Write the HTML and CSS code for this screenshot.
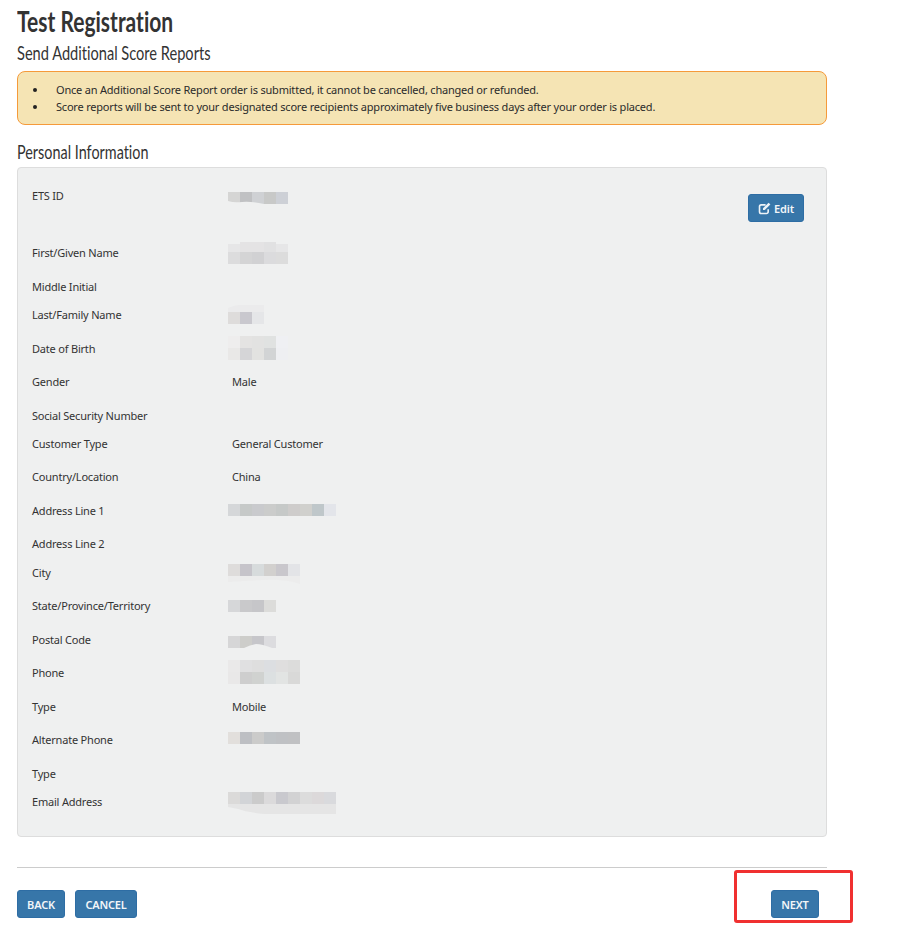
FILE: index.html
```html
<!DOCTYPE html>
<html lang="en">
<head>
    <meta charset="UTF-8">
    <meta name="viewport" content="width=device-width, initial-scale=1.0">
    <title>Test Registration</title>
    <link rel="stylesheet" href="styles.css">
</head>
<body>
    <div class="page">
        <h1 class="page-title">Test Registration</h1>
        <h2 class="page-subtitle">Send Additional Score Reports</h2>

        <div class="notice">
            <ul>
                <li>Once an Additional Score Report order is submitted, it cannot be cancelled, changed or refunded.</li>
                <li>Score reports will be sent to your designated score recipients approximately five business days after your order is placed.</li>
            </ul>
        </div>

        <h3 class="section-title">Personal Information</h3>

        <div class="panel">
            <div class="row row-first">
                <div class="label">ETS ID</div>
                <svg class="blur blur-ets" width="60" height="14">
                    <rect x="0" width="12" height="12" fill="#d5d5d4"/><rect x="12" width="12" height="12" fill="#c0c1c3"/><rect x="24" width="12" height="12" fill="#cfd1d4"/><rect x="36" width="12" height="12" fill="#c8c9c8"/><rect x="48" width="12" height="12" fill="#cdd0d6"/>
                    <path d="M0 9 Q6 11 14 10 T36 12 V12 H0 Z" fill="#eff0f0"/>
                </svg>
                <button class="btn btn-edit" type="button">
                    <svg class="icon-edit" width="13" height="13" viewBox="0 0 12 12">
                        <path d="M9.4 6.6V9a1.6 1.6 0 0 1-1.6 1.6H3A1.6 1.6 0 0 1 1.400 9V4.200A1.600 1.600 0 0 1 3 2.600h4" fill="none" stroke="#eef3f7" stroke-width="1.500"/>
                        <path d="M4.600 7.400V5.800L9.800 0.800 11.400 2.400 6.200 7.400Z" fill="#eef3f7"/>
                    </svg>
                    Edit
                </button>
            </div>
            <div class="row">
                <div class="label">First/Given Name</div>
                <svg class="blur blur-first" width="60" height="22">
                    <rect x="0" y="2" width="60" height="8" fill="#e6e6e7"/><rect x="12" y="0" width="24" height="10" fill="#e4e3e4"/><rect x="36" y="0" width="12" height="10" fill="#e1e1e2"/>
                    <rect x="0" y="10" width="12" height="12" fill="#dcdcdd"/><rect x="12" y="10" width="12" height="12" fill="#d4d4d5"/><rect x="24" y="10" width="12" height="12" fill="#d1d1d3"/><rect x="36" y="10" width="12" height="12" fill="#dbdbdd"/><rect x="48" y="10" width="12" height="12" fill="#dcdcdc"/>
                </svg>
            </div>
            <div class="row row-empty"><div class="label">Middle Initial</div></div>
            <div class="row">
                <div class="label">Last/Family Name</div>
                <svg class="blur blur-last" width="36" height="19">
                    <path d="M0 3 Q6 0 12 0 H36 V7 H0 Z" fill="#ebebec"/>
                    <rect x="0" y="7" width="12" height="12" fill="#dedcdb"/><rect x="12" y="7" width="12" height="12" fill="#c9c8ce"/><rect x="24" y="7" width="12" height="12" fill="#e5e6e8"/>
                </svg>
            </div>
            <div class="row">
                <div class="label">Date of Birth</div>
                <svg class="blur blur-dob" width="60" height="24">
                    <rect x="0" width="12" height="12" fill="#eeeded"/><rect x="12" width="12" height="12" fill="#e4e3e2"/><rect x="24" width="12" height="12" fill="#e2e2e1"/><rect x="36" width="12" height="12" fill="#e0e2e1"/><rect x="48" width="12" height="12" fill="#eff0f3"/>
                    <rect x="0" y="12" width="12" height="12" fill="#e9e8e7"/><rect x="12" y="12" width="12" height="12" fill="#d5d5d7"/><rect x="24" y="12" width="12" height="12" fill="#e2e2e0"/><rect x="36" y="12" width="12" height="12" fill="#d2d4d5"/><rect x="48" y="12" width="12" height="12" fill="#eeeff2"/>
                </svg>
            </div>
            <div class="row">
                <div class="label">Gender</div>
                <div class="value">Male</div>
            </div>
            <div class="row row-short"><div class="label">Social Security Number</div></div>
            <div class="row">
                <div class="label">Customer Type</div>
                <div class="value">General Customer</div>
            </div>
            <div class="row">
                <div class="label">Country/Location</div>
                <div class="value">China</div>
            </div>
            <div class="row">
                <div class="label">Address Line 1</div>
                <svg class="blur blur-addr" width="108" height="12">
                    <rect x="0" width="12" height="12" fill="#d5d7d9"/><rect x="12" width="12" height="12" fill="#c6c9c8"/><rect x="24" width="12" height="12" fill="#c9cacd"/><rect x="36" width="12" height="12" fill="#cbcccb"/><rect x="48" width="12" height="12" fill="#c6c9c8"/><rect x="60" width="12" height="12" fill="#cecccb"/><rect x="72" width="12" height="12" fill="#d0d0cd"/><rect x="84" width="12" height="12" fill="#bfc7ca"/><rect x="96" width="12" height="12" fill="#e3e5ea"/>
                </svg>
            </div>
            <div class="row row-empty"><div class="label">Address Line 2</div></div>
            <div class="row">
                <div class="label">City</div>
                <svg class="blur blur-city" width="72" height="20">
                    <rect x="0" width="12" height="12" fill="#dedcdb"/><rect x="12" width="12" height="12" fill="#c6c4ca"/><rect x="24" width="12" height="12" fill="#d7dbdc"/><rect x="36" width="12" height="12" fill="#d2d0ce"/><rect x="48" width="12" height="12" fill="#c9c7cc"/><rect x="60" width="12" height="12" fill="#e3e4e7"/>
                    <path d="M0 12 H72 V20 Q56 15 36 16 T0 18 Z" fill="#ececec"/>
                </svg>
            </div>
            <div class="row">
                <div class="label">State/Province/Territory</div>
                <svg class="blur blur-state" width="48" height="12">
                    <rect x="0" width="12" height="12" fill="#d6d7d9"/><rect x="12" width="12" height="12" fill="#c9c9cb"/><rect x="24" width="12" height="12" fill="#c6c6c9"/><rect x="36" width="12" height="12" fill="#dcdcda"/>
                </svg>
            </div>
            <div class="row">
                <div class="label">Postal Code</div>
                <svg class="blur blur-postal" width="48" height="12">
                    <rect x="0" width="12" height="12" fill="#d6d6d7"/><rect x="12" width="12" height="12" fill="#cdcdca"/><rect x="24" width="12" height="12" fill="#c6c6ca"/><rect x="36" width="12" height="12" fill="#dcdcdf"/>
                    <path d="M16 12 Q22 9 28 8 Q34 8 44 12 Z" fill="#eff0f0"/>
                </svg>
            </div>
            <div class="row">
                <div class="label">Phone</div>
                <svg class="blur blur-phone" width="72" height="24">
                    <rect x="0" width="12" height="12" fill="#eae9e9"/><rect x="12" width="12" height="12" fill="#e0e0e1"/><rect x="24" width="12" height="12" fill="#dedede"/><rect x="36" width="12" height="12" fill="#dcdee1"/><rect x="48" width="12" height="12" fill="#dfdede"/><rect x="60" width="12" height="12" fill="#dcdcdb"/>
                    <rect x="0" y="12" width="12" height="12" fill="#e9e8e8"/><rect x="12" y="12" width="12" height="12" fill="#cecece"/><rect x="24" y="12" width="12" height="12" fill="#d0d2d0"/><rect x="36" y="12" width="12" height="12" fill="#dce0e1"/><rect x="48" y="12" width="12" height="12" fill="#e2e4e3"/><rect x="60" y="12" width="12" height="12" fill="#d9d9d8"/>
                </svg>
            </div>
            <div class="row">
                <div class="label">Type</div>
                <div class="value">Mobile</div>
            </div>
            <div class="row">
                <div class="label">Alternate Phone</div>
                <svg class="blur blur-alt" width="72" height="12">
                    <rect x="0" width="12" height="12" fill="#e2dfdc"/><rect x="12" width="12" height="12" fill="#bdbfc3"/><rect x="24" width="12" height="12" fill="#cbcbca"/><rect x="36" width="12" height="12" fill="#bfc3c6"/><rect x="48" width="12" height="12" fill="#bfc1c4"/><rect x="60" width="12" height="12" fill="#c0c1c3"/>
                </svg>
            </div>
            <div class="row row-empty"><div class="label">Type</div></div>
            <div class="row row-last">
                <div class="label">Email Address</div>
                <svg class="blur blur-email" width="108" height="23">
                    <rect x="0" width="12" height="12" fill="#dbdad9"/><rect x="12" width="12" height="12" fill="#d2d4d7"/><rect x="24" width="12" height="12" fill="#cbcbcb"/><rect x="36" width="12" height="12" fill="#dbdadb"/><rect x="48" width="12" height="12" fill="#c9c9ce"/><rect x="60" width="12" height="12" fill="#d2d2d3"/><rect x="72" width="12" height="12" fill="#dcdcdc"/><rect x="84" width="12" height="12" fill="#dcd9da"/><rect x="96" width="12" height="12" fill="#d9dadd"/>
                    <path d="M0 12 H108 V22 H36 Q18 20 10 17 L0 15 Z" fill="#e5e5e5"/>
                </svg>
            </div>
        </div>

        <div class="actions">
            <div class="actions-left">
                <button class="btn btn-action" type="button">BACK</button>
                <button class="btn btn-action btn-cancel" type="button">CANCEL</button>
            </div>
            <button class="btn btn-action btn-next" type="button">NEXT</button>
        </div>
    </div>

    <div class="highlight-box"></div>
</body>
</html>
```

FILE: styles.css
```css
* {
    margin: 0;
    padding: 0;
    box-sizing: border-box;
}

body {
    font-family: "Noto Sans", "Open Sans", sans-serif;
    font-size: 11px;
    letter-spacing: -0.2px;
    color: #333;
    background: #fff;
}

/* headings use a condensed face in the original, so squeeze Lato to fit */
.page-title,
.page-subtitle,
.section-title {
    font-family: "Lato", sans-serif;
    font-variant-ligatures: none;
    letter-spacing: 0;
    transform-origin: left center;
}

.page {
    width: 810px;
    margin-left: 17px;
    padding-top: 7px;
}

.page-title {
    font-size: 28px;
    line-height: 28px;
    font-weight: 700;
    color: #333;
    transform: scaleX(0.75);
}

.page-subtitle {
    font-size: 20px;
    line-height: 20px;
    font-weight: 400;
    margin-top: 7px;
    transform: scaleX(0.73);
}

.notice {
    margin-top: 9px;
    height: 54px;
    background: #f5e4b4;
    border: 1px solid #f59a3a;
    border-radius: 8px;
    padding: 9px 15px;
    color: #2b2b2b;
}

.notice ul {
    list-style: none;
    padding-left: 23px;
}

.notice li {
    position: relative;
    line-height: 17px;
}

.notice li::before {
    content: "";
    position: absolute;
    left: -23px;
    top: 7px;
    width: 4px;
    height: 4px;
    border-radius: 50%;
    background: #222;
}

.section-title {
    font-size: 20px;
    line-height: 22px;
    font-weight: 400;
    margin-top: 15px;
    transform: scaleX(0.72);
}

.panel {
    margin-top: 5px;
    background: #eff0f0;
    border: 1px solid #ddd;
    border-radius: 4px;
    padding: 19px 14px 15px;
}

.row {
    display: flex;
    align-items: flex-start;
    min-height: 33.5px;
    line-height: 18px;
}

.row-first {
    min-height: 57px;
}

.row-empty {
    min-height: 28.5px;
}

.row-short {
    min-height: 28px;
}

.row-last {
    min-height: 28px;
}

.label {
    width: 196px;
    flex-shrink: 0;
}

.value {
    padding-left: 4px;
}

.blur {
    display: block;
    flex-shrink: 0;
}

.blur-ets { margin-top: 5px; }
.blur-first { margin-top: -2px; }
.blur-last { margin-top: -1px; }
.blur-dob { margin-top: -4px; }
.blur-addr { margin-top: 2px; }
.blur-city { margin-top: 0; }
.blur-state { margin-top: 3px; }
.blur-postal { margin-top: 5px; }
.blur-phone { margin-top: -4px; }
.blur-alt { margin-top: 1px; }
.blur-email { margin-top: -1px; }

.btn {
    height: 28px;
    background: #3776a9;
    border: 1px solid #2e6da4;
    border-radius: 3px;
    color: #f2f5f8;
    font-family: inherit;
    font-size: 11px;
    font-weight: 600;
    letter-spacing: inherit;
}

.btn-edit {
    width: 56px;
    margin-left: auto;
    margin-top: 7px;
    margin-right: 8px;
    display: flex;
    align-items: center;
    justify-content: center;
    gap: 3px;
}

.actions {
    margin-top: 30px;
    border-top: 1px solid #ccc;
    padding: 22px 8px 0 0;
    display: flex;
    justify-content: space-between;
}

.actions-left {
    display: flex;
    gap: 10px;
}

.btn-action {
    padding: 0 9px;
    min-width: 48px;
}

.btn-cancel {
    min-width: 62px;
}

/* red box drawn over the screenshot */
.highlight-box {
    position: absolute;
    left: 734px;
    top: 870px;
    width: 119px;
    height: 53px;
    border: 3px solid #f03030;
    border-radius: 3px;
}
```
